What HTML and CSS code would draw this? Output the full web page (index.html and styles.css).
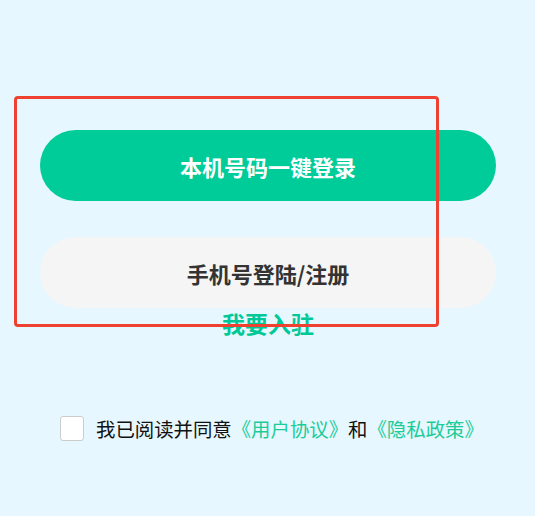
FILE: index.html
```html
<!DOCTYPE html>
<html lang="zh-CN">
  <head>
    <meta charset="UTF-8" />
    <meta name="viewport" content="width=device-width, initial-scale=1.0" />
    <title>登录</title>
    <link rel="stylesheet" href="styles.css">
  </head>
  <body>
    <div class="login-page">
      <!-- Highlight frame drawn over the buttons -->
      <div class="highlight-frame"></div>

      <div class="login-actions">
        <button class="btn btn-primary">本机号码一键登录</button>
        <button class="btn btn-secondary">手机号登陆/注册</button>
        <a href="#" class="join-link">我要入驻</a>
      </div>

      <label class="agreement">
        <span class="checkbox"></span>
        <span class="agreement-text">我已阅读并同意<a href="#">《用户协议》</a>和<a href="#">《隐私政策》</a></span>
      </label>
    </div>
  </body>
</html>
```

FILE: styles.css
```css
body {
  margin: 0;
  padding: 0;
  font-family: "Noto Sans CJK SC", "Noto Sans", sans-serif;
  background-color: #e6f7ff;
}

.login-page {
  position: relative;
  width: 535px;
  height: 516px;
  padding-top: 130px;
  box-sizing: border-box;
}

/* Red annotation frame over the buttons */
.highlight-frame {
  position: absolute;
  left: 14px;
  top: 96px;
  width: 419px;
  height: 225px;
  border: 3px solid #ee4130;
  border-radius: 4px;
  pointer-events: none;
  z-index: 2;
}

.login-actions {
  display: flex;
  flex-direction: column;
  align-items: center;
  padding: 0 39px 0 40px;
}

.btn {
  width: 100%;
  height: 71px;
  border: none;
  border-radius: 36px;
  font-family: inherit;
  font-size: 22px;
  font-weight: 700;
  cursor: pointer;
}

.btn-primary {
  background-color: #00cc99;
  color: #ffffff;
}

.btn-secondary {
  margin-top: 36px;
  background-color: #f5f5f5;
  color: #333333;
}

.join-link {
  margin-top: 1px;
  font-size: 23px;
  font-weight: 700;
  line-height: 28px;
  color: #00c896;
  text-decoration: none;
}

.agreement {
  display: flex;
  align-items: center;
  margin-top: 77px;
  padding-left: 60px;
  cursor: pointer;
}

.checkbox {
  width: 22px;
  height: 23px;
  background-color: #ffffff;
  border: 1px solid #cccccc;
  border-radius: 3px;
}

.agreement-text {
  margin-left: 12px;
  font-size: 19.4px;
  color: #111111;
}

.agreement-text a {
  color: #1ccc98;
  text-decoration: none;
}
```
